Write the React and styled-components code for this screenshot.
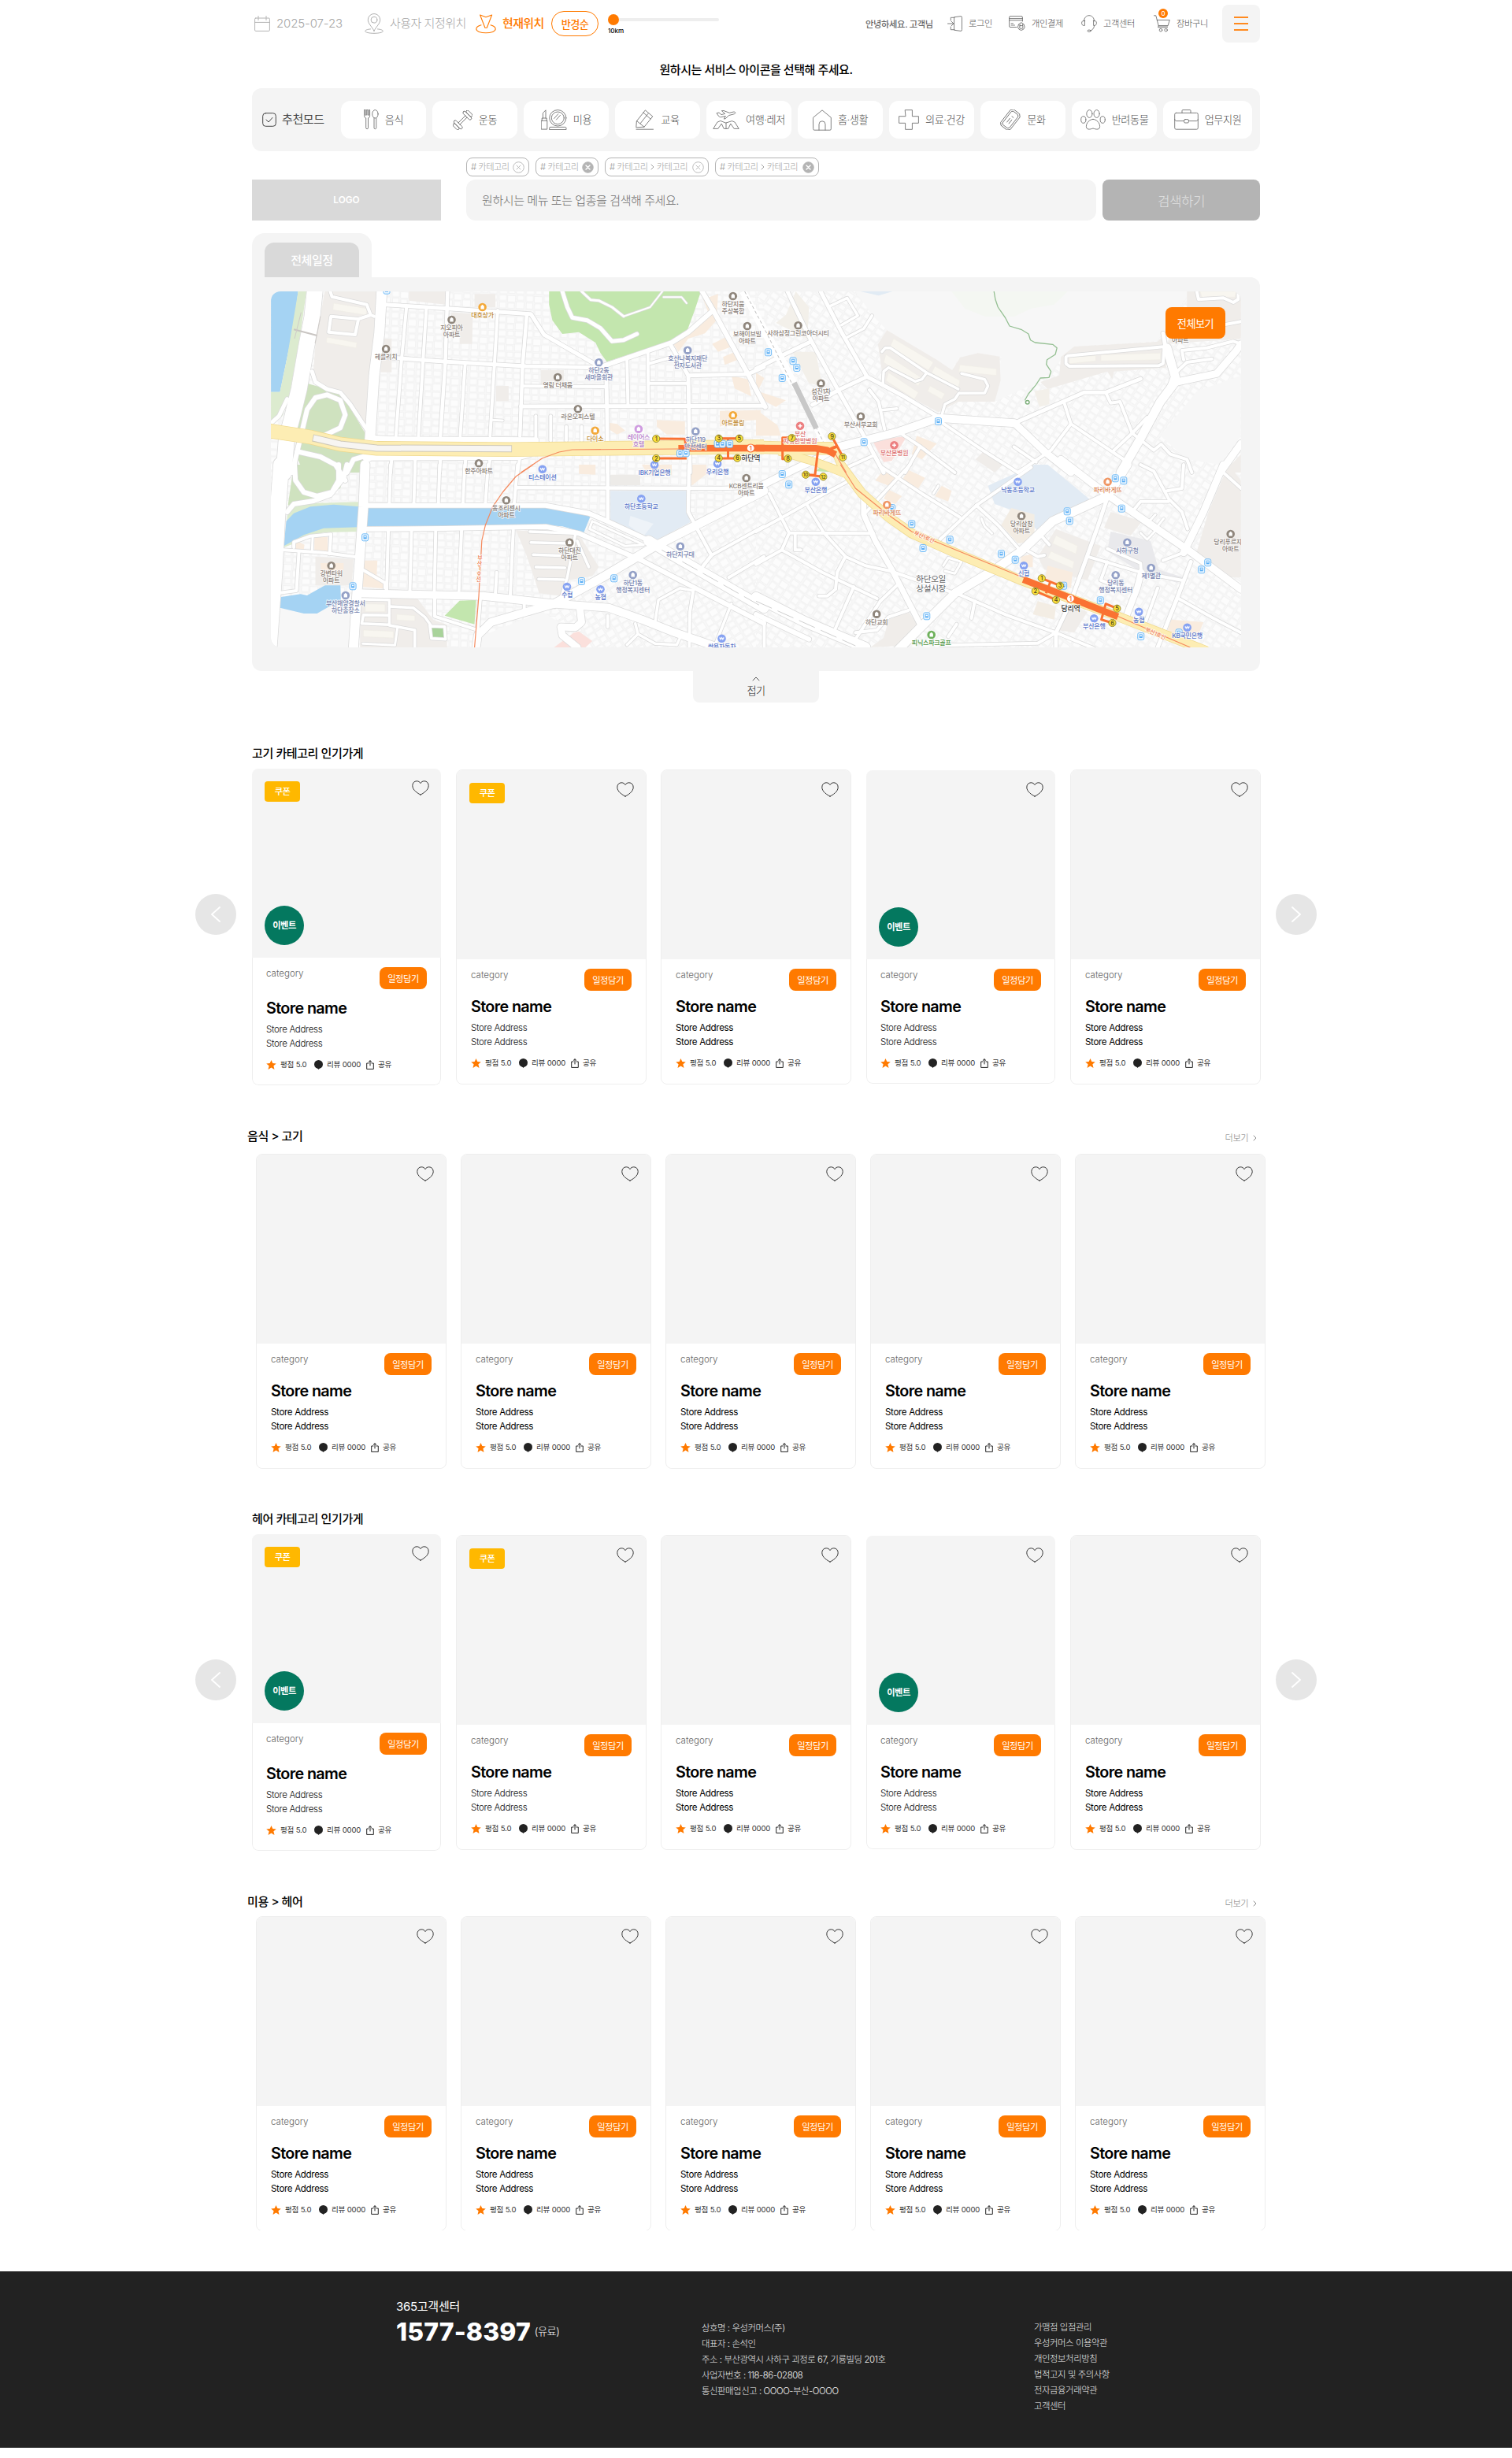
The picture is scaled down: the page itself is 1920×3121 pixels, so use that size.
import React from "react";
import styled, { createGlobalStyle, css } from "styled-components";

const ORANGE = "#ff7a00";

const type = (size, weight = 400, color = "#000", track = -0.03) => css`
  font-size: ${size * 0.94}px;
  font-weight: ${weight};
  color: ${color};
  letter-spacing: ${track}em;
  white-space: nowrap;
`;

const Global = createGlobalStyle`
  * { box-sizing: border-box; }
  body {
    margin: 0;
    background: #fff;
    font-family: Inter, "Noto Sans CJK KR", sans-serif;
    line-height: 1;
  }
  svg { display: block; flex: none; }
  button { font-family: inherit; border: 0; padding: 0; }
`;

const Page = styled.div`
  width: 1920px;
  height: 3121px;
  background: #fff;
  overflow: hidden;
`;

const Container = styled.div`
  width: 1280px;
  margin: 0 auto;
`;

/* ---------- header ---------- */

const Header = styled.header`
  height: 60px;
  display: flex;
  justify-content: space-between;
  align-items: center;
  padding-left: 3px;
`;

const HeaderSide = styled.div`
  display: flex;
  align-items: center;
`;

const Tool = styled.div`
  display: flex;
  align-items: center;
  gap: ${(p) => p.$gap || 8}px;
  width: ${(p) => p.$w}px;
  line-height: 20px;
  ${(p) => type(p.$size || 16, p.$weight || 300, p.$color || "#a6a6a6", p.$track)}
`;

const RadiusPill = styled.button`
  width: 60px;
  height: 32px;
  border: 1px solid ${ORANGE};
  border-radius: 16px;
  background: #fff;
  ${type(14, 500, ORANGE, -0.04)}
`;

const Range = styled.div`
  width: 141px;
  height: 24px;
  margin: 0 0 0 12px;
  display: flex;
  flex-direction: column;
  gap: 3px;
`;

const RangeTrack = styled.div`
  height: 14px;
  display: flex;
  align-items: center;
  &::before {
    content: "";
    width: 14px;
    height: 14px;
    border-radius: 50%;
    background: ${ORANGE};
  }
  &::after {
    content: "";
    flex: 1;
    height: 4px;
    border-radius: 0 2px 2px 0;
    background: #eee;
  }
`;

const RangeLabel = styled.div`
  line-height: 9px;
  ${type(8.6, 500, "#000", 0)}
`;

const Greeting = styled.div`
  width: 104px;
  padding-top: 1px;
  line-height: 20px;
  ${type(12, 500, "#666")}
`;

const CartIconBox = styled.span`
  position: relative;
`;

const CartBadge = styled.span`
  position: absolute;
  left: 6px;
  top: -8px;
  width: 12px;
  height: 12px;
  border-radius: 50%;
  background: ${ORANGE};
  text-align: center;
  line-height: 12px;
  ${type(8.5, 500, "#fff", 0)}
`;

const MenuButton = styled.button`
  width: 48px;
  height: 48px;
  border-radius: 8px;
  background: #f4f4f4;
  display: flex;
  flex-direction: column;
  align-items: center;
  justify-content: center;
  gap: 6px;
`;

const MenuBar = styled.span`
  width: 18px;
  height: 2px;
  background: #ff8a1f;
`;

const Guide = styled.h1`
  margin: 0;
  height: 52px;
  padding-top: 19px;
  line-height: 20px;
  text-align: center;
  ${type(16, 500, "#000", -0.032)}
`;

/* ---------- category bar ---------- */

const CategoryBar = styled.nav`
  height: 80px;
  border-radius: 12px;
  background: #f4f4f4;
  padding: 16px 10px 16px 13px;
  display: flex;
`;

const Recommend = styled.div`
  width: 100px;
  display: flex;
  align-items: center;
  gap: 7px;
  line-height: 20px;
  ${type(16, 400, "#444")}
`;

const CategoryList = styled.div`
  flex: 1;
  display: grid;
  grid-template-columns: repeat(9, 108px) 113px;
  gap: 8px;
`;

const CategoryButton = styled.button`
  border-radius: 12px;
  background: #fff;
  display: flex;
  align-items: center;
  justify-content: center;
  gap: 8px;
  line-height: 20px;
  ${type(14, 300, "#4c4c4c", -0.035)}
`;

/* ---------- search ---------- */

const TagRow = styled.div`
  display: flex;
  gap: 8px;
  padding: 8px 0 4px 272px;
`;

const Tag = styled.div`
  width: ${(p) => p.$w}px;
  height: 24px;
  padding: 0 5px;
  border: 1px solid #b4b4b4;
  border-radius: 8px;
  display: flex;
  align-items: center;
  justify-content: space-between;
  line-height: 20px;
  ${type(12, 300, "#a0a0a0", -0.045)}
`;

const TagText = styled.span`
  display: flex;
  align-items: center;
  gap: 3px;
`;

const SearchRow = styled.div`
  height: 52px;
  display: flex;
`;

const Logo = styled.div`
  width: 240px;
  margin-right: 32px;
  background: #d9d9d9;
  line-height: 52px;
  text-align: center;
  ${type(12.6, 600, "#fff", 0)}
`;

const SearchField = styled.div`
  width: 800px;
  margin-right: 8px;
  padding-left: 20px;
  border-radius: 12px;
  background: #f4f4f4;
  line-height: 53px;
  ${type(16, 300, "#6c6c6c", -0.03)}
`;

const SearchButton = styled.button`
  width: 200px;
  border-radius: 8px;
  background: #b4b4b4;
  ${type(18, 300, "#e2e2e2")}
`;

/* ---------- map panel ---------- */

const TabShell = styled.div`
  width: 152px;
  height: 56px;
  margin-top: 16px;
  padding: 12px 16px 0;
  border-radius: 16px 16px 0 0;
  background: #f4f4f4;
`;

const Tab = styled.div`
  height: 44px;
  border-radius: 12px 12px 0 0;
  background: #d9d9d9;
  line-height: 45px;
  text-align: center;
  ${type(16, 500, "#fff")}
`;

const MapPanel = styled.section`
  height: 500px;
  padding: 18px 24px 0;
  border-radius: 0 12px 12px 12px;
  background: #f4f4f4;
`;

const MapBox = styled.div`
  position: relative;
  width: 1232px;
  height: 452px;
  border-radius: 12px 12px 0 12px;
  overflow: hidden;
`;

const ViewAll = styled.button`
  position: absolute;
  right: 20px;
  top: 20px;
  width: 76px;
  height: 40px;
  border-radius: 8px;
  background: ${ORANGE};
  ${type(14, 400, "#fff", -0.04)}
`;

const Fold = styled.button`
  width: 160px;
  height: 40px;
  margin: 0 auto;
  padding-top: 7px;
  border-radius: 0 0 8px 8px;
  background: #f4f4f4;
  display: flex;
  flex-direction: column;
  align-items: center;
  gap: 2px;
  line-height: 20px;
  ${type(14, 300, "#222", -0.04)}
`;

/* ---------- store lists ---------- */

const ListHeading = styled.div`
  height: ${(p) => p.$h}px;
  padding: 0 ${(p) => (p.$wide ? "324px 0 314px" : "320px")};
  display: flex;
  justify-content: space-between;
  align-items: flex-end;
  padding-bottom: ${(p) => p.$bottom}px;
`;

const ListTitle = styled.h2`
  margin: 0;
  line-height: 20px;
  ${type(16, 500, "#000", -0.028)}
`;

const More = styled.a`
  display: flex;
  align-items: center;
  gap: 6px;
  line-height: 16px;
  ${type(12, 300, "#7c7c7c", -0.05)}
`;

const Carousel = styled.div`
  height: 402px;
  padding-left: 248px;
  display: flex;
  align-items: flex-start;
  gap: 19px;
`;

const ArrowButton = styled.button`
  width: 52px;
  height: 52px;
  margin-top: 159px;
  border-radius: 50%;
  background: #e6e6e6;
  display: flex;
  align-items: center;
  justify-content: center;
`;

const CardRow = styled.div`
  display: grid;
  grid-template-columns: repeat(5, 242px);
  gap: 18px;
  align-items: start;
`;

const PlainRow = styled.div`
  height: ${(p) => p.$h}px;
  padding-left: 325px;
  overflow: hidden;
`;

const CardBox = styled.article`
  margin: ${(p) => p.$top}px ${(p) => (p.$flat ? 1 : 0)}px 0;
  border: ${(p) => (p.$flat ? "0" : "1px solid #eeeeee")};
  border-radius: 8px;
  overflow: hidden;
`;

const Photo = styled.div`
  height: 240px;
  padding: 16px;
  background: #f4f4f4;
  display: flex;
  flex-direction: column;
  justify-content: space-between;
`;

const PhotoTop = styled.div`
  display: flex;
  justify-content: space-between;
  align-items: flex-start;
  margin: 0 -1px 0 0;
`;

const HeartSlot = styled.span`
  margin: -1px 0 0 auto;
`;

const Coupon = styled.span`
  width: 45px;
  height: 26px;
  border-radius: 4px;
  background: #ffb800;
  line-height: 26px;
  text-align: center;
  ${type(12, 500, "#fff", -0.05)}
`;

const EventBadge = styled.span`
  width: 50px;
  height: 50px;
  border-radius: 50%;
  background: #04785f;
  line-height: 50px;
  text-align: center;
  ${type(12, 700, "#fff", -0.05)}
`;

const Info = styled.div`
  height: ${(p) => p.$h}px;
  padding: 12px ${(p) => (p.$flat ? 17 : 18)}px 0;
  background: #fff;
  border: ${(p) => (p.$flat ? "1px solid #eeeeee" : "0")};
  border-top: 0;
  border-radius: 0 0 8px 8px;
`;

const InfoTop = styled.div`
  height: 28px;
  display: flex;
  justify-content: space-between;
`;

const Category = styled.span`
  line-height: 16px;
  ${type(12.3, 300, "#666", 0)}
`;

const AddButton = styled.button`
  width: 60px;
  height: 28px;
  border-radius: 8px;
  background: ${ORANGE};
  ${type(12, 400, "#fff", -0.04)}
`;

const StoreName = styled.h3`
  margin: ${(p) => p.$gap}px 0 6px;
  line-height: 24px;
  ${type(21, 600, "#000", -0.032)}
`;

const Address = styled.p`
  margin: 0;
  line-height: 18px;
  ${(p) => type(12.3, p.$bold ? 400 : 300, p.$bold ? "#000" : "#111", -0.028)}
`;

const Meta = styled.div`
  display: flex;
  align-items: center;
  height: 13px;
  margin-top: 11px;
  line-height: 13px;
  ${type(10.2, 400, "#333", -0.02)}
`;

const MetaText = styled.span`
  width: ${(p) => p.$w}px;
  margin-left: 5px;
`;

/* ---------- footer ---------- */

const Footer = styled.footer`
  height: 224px;
  margin-top: 52px;
  padding: 35px 0 0 503px;
  background: #222;
  display: flex;
`;

const Call = styled.div`
  width: 388px;
`;

const CallTitle = styled.div`
  line-height: 20px;
  ${type(16, 400, "#fff", -0.02)}
`;

const CallLine = styled.div`
  display: flex;
  align-items: center;
  gap: 5px;
  height: 40px;
  margin-top: 2px;
`;

const CallNumber = styled.span`
  ${type(34, 800, "#fff", 0.004)}
`;

const CallNote = styled.span`
  ${type(14, 300, "#fff", -0.035)}
`;

const FooterList = styled.div`
  width: ${(p) => p.$w}px;
  padding-top: ${(p) => p.$top}px;
  line-height: 20px;
  ${type(12.1, 300, "#f0f0f0", -0.037)}
`;

/* ---------- icons ---------- */

const Icon = ({ w, h, color = "#6a6a6a", sw = 0.85, children }) => (
  <svg
    width={w}
    height={h}
    viewBox={`0 0 ${w} ${h}`}
    fill="none"
    stroke={color}
    strokeWidth={sw}
    strokeLinecap="round"
    strokeLinejoin="round"
  >
    {children}
  </svg>
);

const CalendarIcon = () => (
  <Icon w={20} h={20} color="#b4b4b4" sw={1}>
    <rect x="0.6" y="3" width="18.8" height="16.4" rx="1.2" />
    <path d="M5 .5v5M15 .5v5M.6 8.4h18.8" />
  </Icon>
);

const PinIcon = () => (
  <Icon w={24} h={26} color="#a0a0a0">
    <path d="M12 22.3C9.5 17 4.3 13 4.3 8.2a7.7 7.7 0 0 1 15.4 0C19.7 13 14.5 17 12 22.3z" />
    <circle cx="12" cy="8.2" r="3.9" />
    <path d="M7.5 19.9C3 20.3.7 21.4.7 22.5c0 1.6 5 2.8 11.3 2.8s11.3-1.2 11.3-2.8c0-1.1-2.3-2.2-6.8-2.6" />
  </Icon>
);

const CurrentIcon = () => (
  <Icon w={26} h={25} color={ORANGE} sw={1.1}>
    <path d="M5.6 1 13 3.8 20.6 1l-6.3 16.2h-2.4z" />
    <path d="M7 13.8C3 15 .8 16.9.8 18.8c0 2.9 5.5 5 12.2 5s12.2-2.1 12.2-5c0-1.9-2.2-3.8-6.2-5" />
  </Icon>
);

const LoginIcon = () => (
  <Icon w={19} h={20}>
    <path d="M4.3 6V2.3H9M4.3 14v3.7H9M9 1.7 17 .6q1.5 0 1.5 1.6v15.6q0 1.6-1.5 1.6L9 18.3z" />
    <path d="M.5 10h7.3M5.2 7.2 7.9 10l-2.7 2.8" />
  </Icon>
);

const PayIcon = () => (
  <Icon w={21} h={20}>
    <path d="M10 14.5H2A1.4 1.4 0 0 1 .6 13V2A1.4 1.4 0 0 1 2 .6h14A1.4 1.4 0 0 1 17.4 2v5M.6 3.6h16.8M.6 5.8h16.8M3 9.8h2.500M3 12h4.500" />
    <path d="M14 12.600v-2a1.800 1.800 0 0 1 3.600 0v2" />
    <path d="M12.300 11.500a4.300 4.300 0 1 0 7 0M12.300 11.500l1-1.500M19.300 11.500l-1-1.500" />
    <rect x="13.800" y="12.600" width="4" height="3.600" rx=".5" />
  </Icon>
);

const HeadsetIcon = () => (
  <Icon w={20} h={22}>
    <path d="M3.4 7.8C3.6 3.6 6.4.7 10 .7s6.4 2.9 6.6 7.1" />
    <path d="M4.4 7.2v6.2C2 13.8.6 12.4.6 10.3s1.4-3.5 3.8-3.1zM15.6 7.2v6.2c2.4.4 3.8-1 3.8-3.1s-1.4-3.5-3.8-3.1z" />
    <path d="M16.6 13.5c-.3 3.5-2.2 5.6-5 6.4" />
    <ellipse cx="10" cy="20.2" rx="2" ry="1.2" />
  </Icon>
);

const CartIcon = () => (
  <Icon w={21} h={22}>
    <path d="M.5.8h2.3l3.4 13h11.5M4.3 6.4h16L18 13.8H6.2M6.2 13.8l-.6 2h12" />
    <circle cx="9" cy="19.2" r="1.8" />
    <circle cx="15.6" cy="19.2" r="1.8" />
  </Icon>
);

const CheckIcon = () => (
  <Icon w={18} h={18} color="#444" sw={1}>
    <rect x=".7" y=".7" width="16.6" height="16.6" rx="3.6" />
    <path d="m5 9 3 3 5-5.6" />
  </Icon>
);

const FoodIcon = () => (
  <Icon w={19} h={26}>
    <path d="M.6.6v7.6c0 1.6 1 2.4 2.1 2.7v12.4a1.4 1.4 0 0 0 2.8 0V10.9c1.2-.3 2.1-1.1 2.1-2.7V.6H6.1v6.6H5V.6H3.3v6.6H2.1V.6z" />
    <ellipse cx="14.4" cy="5.8" rx="3.7" ry="5.2" />
    <path d="M13 10.8v12.5a1.4 1.4 0 0 0 2.8 0V10.8" />
  </Icon>
);

const GymIcon = () => (
  <Icon w={25} h={25}>
    <g transform="rotate(-45 12.5 12.5)">
      <path d="M6.2 11h12.6M6.2 14h12.6" />
      <rect x="2.4" y="5.6" width="3.8" height="13.8" rx="1.9" />
      <rect x="18.8" y="5.6" width="3.8" height="13.8" rx="1.9" />
      <rect x="-1.2" y="7.6" width="3.6" height="9.8" rx="1.8" />
      <rect x="22.6" y="7.6" width="3.6" height="9.8" rx="1.8" />
    </g>
  </Icon>
);

const BeautyIcon = () => (
  <Icon w={33} h={26}>
    <path d="M2.4 11V4.6L6 .8V11M1.2 14.2V11h6v3.2M.6 14.2h7.2v10.9H.6z" />
    <ellipse cx="21.3" cy="10.8" rx="10.6" ry="10.2" />
    <ellipse cx="21.3" cy="10.8" rx="8" ry="7.8" />
    <path d="m16.6 11.5 5.2-5.8M19.4 13l5-5.6M10.6 25.2v-1.4a1.4 1.4 0 0 1 1.4-1.4h18.6a1.4 1.4 0 0 1 1.4 1.4v1.4z" />
  </Icon>
);

const EducationIcon = () => (
  <Icon w={24} h={26}>
    <path d="M1.6 14.6 12.4.9l9.4 8L11 22.2 1.2 22.8zM1.6 14.6l9.4 7.6M10 4l9 8M6.2 17.6 16.4 4.8" />
    <path d="M1 25.2h21.5" />
  </Icon>
);

const TravelIcon = () => (
  <Icon w={34} h={26}>
    <path d="M5.4 4.600 8 4l3 2.600 4.600-1.200L11.400 1.700 14 1.500l7.200 2.800 5-1.200c1.600-.3 2.600.4 2.600 1.200 0 .7-.9 1.300-2 1.600l-6.400 1.700-4 4-2 .5 1.900-3.600-6 1.200c-1.400 0-3-1-3.600-2.400z" />
    <path d="M9.500 14.600 5.800 16.200.8 24.400h6l4.400-6.400 3 6.400h5.600l3-6.400 4.400 6.400h6l-5-8.200-3.700-1.600-7.500 2.400zM17 17v7.400" />
  </Icon>
);

const HomeIcon = () => (
  <Icon w={24} h={27}>
    <path d="M.7 10.2 12 .9l11.300 9.300v14.600a1.400 1.400 0 0 1-1.400 1.400H2.100a1.400 1.400 0 0 1-1.400-1.400z" />
    <path d="M8 26.2v-7.400a4 4 0 0 1 8 0v7.400" />
  </Icon>
);

const MedicalIcon = () => (
  <Icon w={26} h={26}>
    <path d="M8.6.7h8.8v8h8v8.6h-8v8H8.6v-8h-8V8.7h8z" />
  </Icon>
);

const TicketIcon = () => (
  <Icon w={26} h={26}>
    <g transform="rotate(-52 13 13)">
      <path d="M3 5.4h20l3 3v9.200l-3 3H3l-3-3V8.400z" />
      <path d="M4 7.600h18l1.800 1.800v7.200L22 18.400H4l-1.800-1.800V9.400z" />
      <path d="M8 11.500h6M8 14.500h6M17.500 12v2.400" />
    </g>
  </Icon>
);

const PawIcon = () => (
  <Icon w={32} h={26}>
    <ellipse cx="11.4" cy="5.5" rx="3.6" ry="4.9" />
    <ellipse cx="20.6" cy="5.5" rx="3.6" ry="4.9" />
    <ellipse cx="3.8" cy="13" rx="3.1" ry="4.3" />
    <ellipse cx="28.2" cy="13" rx="3.1" ry="4.3" />
    <path d="M16 12.4c-4.4 0-8.6 4.6-8.6 9 0 4.600 4.200 4.200 8.600 2.600 4.400 1.600 8.600 2 8.600-2.600 0-4.400-4.200-9-8.600-9z" />
  </Icon>
);

const BriefcaseIcon = () => (
  <Icon w={31} h={26}>
    <rect x=".7" y="4.4" width="29.6" height="20.8" rx="1.8" />
    <path d="M10 4.4V1.6a1 1 0 0 1 1-1h9a1 1 0 0 1 1 1v2.8M.7 12.6c0 1.2 1 2 2.2 2h9.6M18.5 14.6h9.6c1.2 0 2.2-.8 2.2-2" />
    <rect x="12.6" y="12.6" width="5.8" height="4.4" rx="1.4" />
  </Icon>
);

const CloseDot = ({ solid }) => (
  <svg width="15" height="15" viewBox="0 0 15 15" fill="none">
    <circle cx="7.5" cy="7.5" r="6.8" fill={solid ? "#b4b4b4" : "none"} stroke="#b4b4b4" strokeWidth="0.9" />
    <path
      d="m5 5 5 5m0-5-5 5"
      stroke={solid ? "#fff" : "#b4b4b4"}
      strokeWidth={solid ? 1.4 : 0.9}
      strokeLinecap="round"
    />
  </svg>
);

const Chevron = ({ w, h, color, sw = 1, dir = "right" }) => (
  <Icon w={w} h={h} color={color} sw={sw}>
    <path
      d={
        dir === "right"
          ? `M1 1 ${w - 1} ${h / 2} 1 ${h - 1}`
          : dir === "left"
          ? `M${w - 1} 1 1 ${h / 2} ${w - 1} ${h - 1}`
          : `M1 ${h - 1} ${w / 2} 1 ${w - 1} ${h - 1}`
      }
    />
  </Icon>
);

const HeartIcon = () => (
  <Icon w={22} h={19} color="#333" sw={1}>
    <path d="M11 18.1C7.6 16.4.8 12.3.8 6.6.8 3.1 3.2.8 6.2.8c2.2 0 3.9 1.1 4.8 2.8.9-1.7 2.6-2.8 4.8-2.8 3 0 5.4 2.3 5.4 5.8 0 5.7-6.8 9.8-10.2 11.5z" />
  </Icon>
);

const StarIcon = () => (
  <svg width="13" height="12" viewBox="0 0 13 12">
    <path fill={ORANGE} d="M6.5 0l1.8 4 4.500.4-3.400 2.900 1.100 4.600-4-2.400-4 2.400 1.100-4.600L.2 4.400 4.700 4z" />
  </svg>
);

const BubbleIcon = () => (
  <svg width="11" height="12" viewBox="0 0 11 12">
    <ellipse cx="5.5" cy="5.4" rx="5.500" ry="5.400" fill="#222" />
    <path fill="#222" d="M3.800 10h3.400L5.500 12z" />
  </svg>
);

const ShareIcon = () => (
  <Icon w={10} h={12} color="#222" sw={1}>
    <path d="M3 4H.7v7.4h8.6V4H7M5 7V1M3.2 2.4 5 .7l1.8 1.7" />
  </Icon>
);

/* ---------- map drawing ---------- */

/* The sheet is surveyed in four tiles; each tile has its own origin. */
const ORIGIN = { A: [310, 290], B: [960, 290], C: [310, 590], D: [960, 590] };
const at = (t, x, y) => [
  +(ORIGIN[t][0] + x / 2.3758).toFixed(1),
  +(ORIGIN[t][1] + y / 3).toFixed(1),
];
const trace = (t, str) => {
  const n = str.split(" ").map(Number);
  const out = [];
  for (let i = 0; i < n.length; i += 2) out.push(at(t, n[i], n[i + 1]).join(" "));
  return "M" + out.join("L");
};

const AREAS = [
  ["B", "#f4f7f2", "590 240 940 240 900 290 830 305 780 335 690 335 630 305"],
  ["A", "#a5d3f3", "81 240 163 240 150 370 130 490 108 623 81 623"],
  ["A", "#dcebcf", "163 240 188 240 170 400 135 650 115 715 81 750 81 623 108 623 130 490"],
  ["A", "#f0edea", "243 240 400 240 385 500 365 780 330 690 270 615 222 595 208 560 215 440"],
  ["A", "#cfe2bf", "190 590 250 612 300 640 365 780 365 930 180 930 155 860 160 760"],
  ["C", "#cfe2bf", "150 0 310 0 290 90 220 130 132 155"],
  ["A", "#c3e6ae", "920 240 1378 240 1360 310 1338 385 1285 430 1094 508 1075 475 1060 435 1010 395 960 402 930 350 920 290"],
  ["A", "#f0edea", "497 240 608 240 608 290 497 275"],
  ["A", "#f0edea", "695 250 758 250 758 300 695 300"],
  ["A", "#f0edea", "625 320 690 325 688 440 650 440 650 410 625 405"],
  ["A", "#f0edea", "412 420 445 420 445 548 412 548"],
  ["A", "#f0edea", "760 600 798 600 798 658 760 658"],
  ["A", "#f0edea", "895 540 965 540 965 595 895 595"],
  ["A", "#f9ecdf", "1385 270 1430 250 1425 350 1390 400 1340 420 1310 470 1290 430 1340 395 1400 320"],
  ["A", "#f9ecdf", "1412 440 1460 410 1470 450 1430 470"],
  ["A", "#f9ecdf", "1445 490 1490 465 1500 495 1450 520"],
  ["A", "#f9ecdf", "1470 560 1520 575 1530 640 1480 610"],
  ["A", "#f9ecdf", "1435 695 1558 692 1558 728 1490 735 1435 755"],
  ["A", "#f9ecdf", "1245 730 1330 735 1330 785 1275 785 1245 755"],
  ["A", "#f9ecdf", "1100 740 1125 745 1150 770 1125 785 1100 765"],
  ["B", "#f9ecdf", "0 550 25 570 5 620 90 655 60 680 0 640"],
  ["B", "#f9ecdf", "0 690 65 750 75 790 0 790"],
  ["B", "#e1ebf4", "315 240 412 240 370 256"],
  ["B", "#f3f0ea", "120 240 160 300 155 420 60 360 90 330"],
  ["B", "#f3f0ea", "110 470 180 470 200 600 160 590"],
  ["B", "#f0edea", "395 388 545 500 592 540 615 492 670 475 735 488 738 580 720 660 610 660 550 700 385 590 368 440"],
  ["B", "#f0edea", "920 490 960 450 1210 432 1240 400 1237 530 1080 545 1075 575 1060 545 880 612 858 585 915 560"],
  ["B", "#f0edea", "1300 240 1463 240 1463 420 1240 440 1300 310"],
  ["B", "#f3f0ea", "840 620 885 610 885 670 855 680"],
  ["B", "#fbe0dc", "350 805 455 792 410 885 385 890"],
  ["B", "#f0edea", "690 845 745 900 720 930 662 880"],
  ["B", "#f9ecdf", "485 790 545 820 500 880 470 860"],
  ["B", "#f0edea", "1463 860 1410 930 1463 930"],
  ["C", "#dcebcf", "132 170 180 148 345 142 348 255 240 258 120 315 130 200"],
  ["C", "#a5d3f3", "127 215 150 185 200 160 270 152 348 160 348 238 240 242 180 268 120 310"],
  ["C", "#a5d3f3", "370 160 905 162 1045 195 1025 258 960 235 905 230 600 236 370 238"],
  ["C", "#a5d3f3", "108 505 170 493 190 498 250 455 290 445 292 520 250 545 220 567 180 567 108 545"],
  ["C", "#f0edea", "215 350 330 360 325 460 215 460"],
  ["C", "#f9ecdf", "230 375 300 375 300 400 270 420 235 415"],
  ["C", "#f9ecdf", "212 275 252 275 252 330 212 325"],
  ["C", "#f9ecdf", "150 285 182 305 180 325 150 325"],
  ["C", "#f9ecdf", "360 365 402 365 400 420 422 440 422 472 358 465"],
  ["C", "#f0edea", "350 505 520 505 570 590 612 610 612 696 350 696"],
  ["C", "#f0edea", "820 250 1010 265 1070 390 1050 425 975 440 960 500 890 490 875 430 850 340"],
  ["C", "#c3e6ae", "605 575 650 518 700 515 695 608"],
  ["C", "#a9d39b", "565 617 605 617 605 660 565 660"],
  ["C", "#e2ebf4", "1105 100 1335 100 1345 220 1240 290 1105 212"],
  ["C", "#eef3f8", "1165 195 1235 225 1205 272 1160 232"],
  ["C", "#edebe8", "1105 38 1195 38 1195 78 1105 78"],
  ["C", "#f9ecdf", "1010 0 1060 0 1060 38 1010 35"],
  ["C", "#f9ecdf", "1345 0 1395 0 1395 35 1350 80"],
  ["C", "#f9ecdf", "1200 0 1290 0 1290 40 1220 40"],
  ["C", "#fbe0dc", "935 696 995 640 1010 635 1050 672 1030 696"],
  ["D", "#e2ebf4", "700 80 840 0 880 0 1015 140 940 195 858 262 800 185 720 150"],
  ["D", "#f3ede4", "770 165 840 190 840 290 790 300 740 230"],
  ["D", "#f9ecdf", "385 20 425 40 400 80 360 60"],
  ["D", "#f9ecdf", "460 20 510 50 490 90 440 60"],
  ["D", "#f9ecdf", "400 95 440 120 420 150 385 130"],
  ["D", "#f9ecdf", "560 80 590 100 580 140 540 120"],
  ["D", "#f0edea", "905 245 1040 310 1000 440 870 400 850 350"],
  ["D", "#f9ecdf", "880 385 955 410 950 470 870 440"],
  ["D", "#f9ecdf", "800 350 835 340 835 390 800 390"],
  ["D", "#f0edea", "1070 180 1165 215 1130 270 1050 240"],
  ["D", "#e9e9ec", "1070 255 1190 290 1215 400 1290 430 1270 450 1150 400 1060 330"],
  ["D", "#f0edea", "1425 0 1463 60 1463 430 1420 430 1330 330 1365 180"],
  ["D", "#f0edea", "940 540 1000 560 960 640 910 630"],
  ["D", "#f0edea", "400 590 460 560 495 620 435 690 345 696 385 660"],
  ["D", "#f9ecdf", "1252 590 1350 600 1330 660 1240 640"],
  ["D", "#f3ede4", "850 520 905 540 900 590 835 570"],
  ["B", "#c3e6ae", "180 925 210 890 260 930"],
];

const ROADS = [
  ["A", 20, "213 240 205 340 188 450 166 610 145 720 128 800 120 930"],
  ["C", 20, "112 0 100 200 92 400 75 696"],
  ["A", 5, "81 742 105 715 130 650"],
  ["A", 6, "145 930 175 770 190 690 215 645 250 634 290 655 305 710 290 760 240 790 215 792"],
  ["A", 5, "205 545 215 585 250 612 290 625 320 670 372 770"],
  ["A", 6, "160 850 230 870 275 900 305 960"],
  ["A", 6, "310 930 330 880 370 865"],
  ["C", 6, "152 0 155 60 180 105 220 120 265 105 285 60 285 0"],
  ["C", 6, "130 180 150 150 210 138 260 115 300 50 310 0"],
  ["A", 13, "415 240 408 400 392 560 380 800 372 870"],
  ["C", 12, "365 0 360 160 352 300 340 500 330 696"],
  ["A", 4, "260 240 265 260 370 290 382 330 392 335"],
  ["A", 4, "382 330 345 345 335 405 255 395 262 335 345 345"],
  ["A", 5, "425 290 615 305 865 326 905 405 1070 525"],
  ["A", 5, "400 488 610 508 850 525 1070 530"],
  ["A", 4, "490 300 475 500 458 790"],
  ["A", 4, "550 300 540 500 526 790"],
  ["A", 4.5, "614 240 612 310 607 510 592 790"],
  ["A", 4, "667 515 652 790"],
  ["A", 4, "765 312 755 520 742 790"],
  ["A", 4.5, "853 326 840 525 832 790"],
  ["A", 3, "748 730 780 732"],
  ["A", 8, "385 800 460 805 880 808"],
  ["A", 5, "960 240 975 300 990 340 1035 350 1075 380 1110 430 1145 425 1185 402"],
  ["A", 3, "1018 240 1045 272 1070 275 1110 300 1145 335"],
  ["A", 2, "1145 335 1225 300 1262 240"],
  ["A", 2, "1265 262 1320 262 1335 285"],
  ["A", 6, "1070 530 1290 435 1340 395 1415 312"],
  ["A", 6, "1382 240 1415 312 1520 555 1572 680"],
  ["A", 5, "1285 440 1340 560 1520 555 1568 528"],
  ["A", 5, "1340 560 1342 700 1345 930"],
  ["A", 5, "1092 530 1095 700 1097 930"],
  ["A", 5, "835 678 1568 676"],
  ["A", 4, "1155 500 1158 672"],
  ["A", 4, "1218 475 1220 672"],
  ["A", 4, "1222 590 1340 590"],
  ["A", 4, "1222 515 1278 495"],
  ["A", 4, "840 601 1090 603"],
  ["A", 4, "880 715 880 800"],
  ["A", 4, "925 715 925 808"],
  ["A", 4, "972 755 972 808"],
  ["A", 4, "1018 755 1018 808"],
  ["A", 8, "368 872 830 870 860 860"],
  ["A", 4, "832 870 825 930"],
  ["C", 4, "825 0 815 150"],
  ["A", 4, "445 880 442 930"],
  ["C", 4, "442 0 438 150"],
  ["A", 4, "516 880 516 930"],
  ["C", 4, "516 0 512 150"],
  ["A", 4, "592 880 590 930"],
  ["C", 4, "590 0 586 150"],
  ["A", 4, "668 880 666 930"],
  ["C", 4, "666 0 660 150"],
  ["A", 4, "742 880 736 930"],
  ["C", 4, "736 0 728 150"],
  ["C", 4.5, "822 88 1440 90 1568 85"],
  ["C", 4.5, "1097 0 1097 212"],
  ["C", 4.5, "1342 0 1340 180 1365 240 1410 345 1385 385"],
  ["C", 6, "370 155 910 155 1040 185 1095 215 1240 300"],
  ["C", 6, "370 245 600 243 910 236 1010 262 1200 365 1568 605"],
  ["C", 13, "1220 290 1300 350 1568 545"],
  ["D", 13, "0 505 150 600 330 696"],
  ["D", 6, "0 570 160 665"],
  ["C", 11, "935 530 1080 430 1240 310 1568 100"],
  ["D", 9, "0 90 120 15 180 -20"],
  ["B", 9, "180 882 245 835"],
  ["C", 4, "435 250 430 480"],
  ["C", 4, "505 250 500 480"],
  ["C", 4, "578 250 574 480"],
  ["C", 4, "656 250 648 480"],
  ["C", 4, "812 250 803 495"],
  ["C", 4, "762 410 758 490"],
  ["C", 10, "345 490 720 500 940 530 1100 545 1200 590 1300 640 1430 696"],
  ["C", 10, "935 530 745 600 705 650 700 696"],
  ["C", 4, "575 500 575 578 700 628"],
  ["C", 5, "712 500 700 696"],
  ["C", 4, "845 520 845 560"],
  ["C", 4, "120 325 240 335 340 352"],
  ["C", 4, "165 335 158 480 108 488"],
  ["C", 4, "150 315 150 295 200 272 262 265 258 340"],
  ["C", 3, "207 272 205 330"],
  ["C", 4, "355 398 425 450 425 470"],
  ["C", 3.5, "355 513 438 515 438 610 355 605 360 572 438 574"],
  ["C", 3.5, "438 612 515 630 515 696"],
  ["C", 3.5, "438 540 510 545 545 580 565 615 605 617 608 665 565 662 560 610"],
  ["C", 3, "462 625 455 688 358 682"],
  ["C", 3.5, "862 255 1000 262 975 430 958 498"],
  ["C", 3.5, "865 296 975 300"],
  ["C", 3.5, "872 343 970 347"],
  ["C", 3.5, "880 390 968 393"],
  ["C", 3.5, "888 436 965 438"],
  ["C", 3.5, "1005 290 1040 390"],
  ["C", 3, "1050 215 1042 245 1150 310 1205 305 1055 218"],
  ["C", 9, "1013 548 1018 600 1000 620 955 618 960 650 1005 696"],
  ["C", 4, "1097 575 1097 618"],
  ["C", 4, "1355 480 1345 560 1343 696"],
  ["C", 3.5, "1155 686 1188 645 1180 605"],
  ["C", 3.5, "1188 645 1240 682 1305 686 1315 660"],
  ["C", 3.5, "1240 600 1250 515 1315 470 1355 480"],
  ["C", 3.5, "1470 530 1420 690"],
  ["C", 4, "1462 430 1568 350"],
  ["C", 4, "1410 345 1568 235"],
  ["B", 5, "95 240 165 425 245 610 330 800 385 930"],
  ["B", 5, "195 240 260 400 335 565"],
  ["B", 3.5, "225 295 275 265 307 332 258 368"],
  ["B", 3.5, "275 415 325 382 350 332"],
  ["B", 5, "0 535 85 480 168 430"],
  ["B", 5, "335 565 250 615 170 672"],
  ["B", 5, "335 565 440 635 550 718"],
  ["B", 10, "240 835 430 775 550 722 780 742"],
  ["B", 4, "342 615 370 660 388 765"],
  ["B", 3.5, "378 692 425 686"],
  ["B", 3.5, "380 470 390 455 405 455 515 550 610 612"],
  ["B", 3.5, "383 590 385 545 400 530 480 583 500 575 515 550"],
  ["B", 3.5, "562 705 570 670 600 650 612 628 690 627 700 600 690 575 620 553"],
  ["B", 4, "940 485 1235 450"],
  ["B", 4, "1232 450 1228 515 1215 523 945 525 935 515 935 490"],
  ["B", 5, "780 742 990 625 1055 625 1160 573"],
  ["B", 9, "780 742 870 850 950 930"],
  ["D", 9, "920 -20 1060 115 1320 340 1463 475"],
  ["B", 11, "1240 455 1268 580 1220 660 1160 800 1100 930"],
  ["B", 9, "1463 440 1450 465 1390 553 1270 585"],
  ["B", 5, "1235 450 1228 400"],
  ["B", 4, "1240 620 1255 570"],
  ["B", 4, "1290 500 1285 465 1360 455 1440 430 1463 440"],
  ["B", 4, "1270 545 1300 510 1375 497"],
  ["B", 4, "1330 240 1335 270 1410 265 1440 282 1455 270 1455 240"],
  ["B", 4, "1400 370 1463 355"],
  ["B", 4, "930 665 950 745 1115 885"],
  ["B", 4, "550 730 690 850 790 930"],
  ["B", 4, "790 930 890 845 950 745"],
  ["B", 4, "778 832 845 890"],
  ["B", 4, "1055 625 1070 665 1098 660 1135 780 1200 845 1222 822 1250 860 1300 880 1315 930"],
  ["B", 4, "1135 780 1080 845"],
  ["B", 4, "1135 780 1180 720"],
  ["B", 4, "430 775 495 830 600 930"],
  ["B", 4, "495 830 450 930"],
  ["B", 9, "1463 820 1400 930"],
  ["D", 9, "1410 0 1350 180 1290 335"],
  ["D", 4, "1410 30 1463 90"],
  ["B", 4, "355 865 250 925"],
  ["B", 4, "0 675 20 675"],
  ["D", 4, "0 255 80 200 200 115 290 55"],
  ["D", 4, "40 110 100 260 78 325 0 380"],
  ["D", 4, "155 155 205 260 270 350"],
  ["D", 4, "100 260 355 262"],
  ["D", 4, "118 265 118 325 135 325"],
  ["D", 7, "325 120 325 190 360 290 410 400 500 620"],
  ["D", 4, "78 325 200 410 365 510"],
  ["D", 4, "270 350 330 385 405 405 600 490"],
  ["D", 4, "270 350 245 410 240 475 215 500 190 500"],
  ["D", 4, "295 465 232 645"],
  ["D", 4, "425 460 375 520 300 665"],
  ["D", 4, "300 640 365 630 400 580 460 555"],
  ["D", 4, "25 590 25 696"],
  ["D", 11, "425 710 500 615 600 490 720 400 800 330 895 215 1060 120 1120 0"],
  ["D", 4, "380 10 500 110 615 200"],
  ["D", 4, "465 0 325 190"],
  ["D", 4, "555 285 665 155 830 10"],
  ["D", 4, "665 155 730 230 800 330"],
  ["D", 3, "680 205 690 235 712 262"],
  ["D", 3, "535 110 550 80"],
  ["D", 4, "605 490 760 575 905 640 1020 700"],
  ["D", 4, "905 640 850 680 560 688"],
  ["D", 5, "905 640 905 700"],
  ["D", 4, "660 520 650 585"],
  ["D", 4, "605 608 580 655"],
  ["D", 3, "565 385 580 355 620 370 600 415 570 405"],
  ["D", 5, "1060 125 1030 240 1000 345 950 520 905 640"],
  ["D", 4, "1000 350 1160 410 1290 442"],
  ["D", 4, "1060 320 1160 375 1162 410"],
  ["D", 4, "1060 370 1040 440 1100 470"],
  ["D", 8, "1162 410 1150 470 1115 585"],
  ["D", 4, "1212 470 1175 600"],
  ["D", 5, "1312 370 1270 510 1212 696"],
  ["D", 4, "1275 510 1380 585 1463 640"],
  ["D", 4, "1228 365 1300 330"],
  ["D", 4, "1135 180 1160 140 1245 140"],
  ["D", 4, "1160 0 1200 25 1245 130 1285 180 1302 245"],
  ["D", 4, "1240 100 1285 90 1290 0"],
  ["D", 3, "1180 225 1205 190"],
  ["D", 3, "1205 245 1230 205"],
  ["D", 3, "1160 260 1180 285 1210 245"],
  ["D", 4, "815 325 850 350 870 345"],
  ["D", 4, "860 270 885 305"],
];

const YELLOW = [
  ["A", 17, "60 768 200 795 290 822 400 838 800 842 1100 838 1568 832"],
  ["B", 15, "0 833 120 838 235 838"],
  ["B", 9, "70 850 180 890 280 935"],
  ["D", 9, "180 -10 270 35"],
  ["B", 8, "235 840 255 900 275 940"],
  ["D", 11, "255 0 320 110 400 200 470 262 600 335 800 440 1095 580 1360 710"],
];

const METRO = [
  ["A", "835 930 900 875 950 852 990 843 1310 840"],
  ["C", "872 0 820 45 780 105 750 160 728 230 717 290 708 500 695 700"],
  ["B", "235 850 272 930"],
  ["D", "255 0 300 90 400 192 470 255 545 295 810 432"],
  ["D", "1090 577 1310 696"],
];

const PLATFORMS = [
  ["A", 8.5, "1310 838 1570 837"],
  ["B", 8.5, "0 837 180 838 215 845 240 862"],
  ["D", 8.5, "806 437 1092 579"],
  ["A", 3, "1243 801 1330 802 1333 835"],
  ["A", 3, "1243 876 1335 876"],
  ["A", 3, "1432 800 1494 800"],
  ["A", 3, "1460 800 1460 876"],
  ["A", 3, "1432 876 1488 876"],
  ["B", 3, "108 797 80 797 80 878 96 878"],
  ["B", 3, "230 795 262 870"],
  ["B", 4, "225 840 245 830"],
  ["B", 3, "187 845 178 940 150 938 203 946"],
  ["D", 3, "862 433 917 461"],
  ["D", 3, "888 446 875 490"],
  ["D", 3, "843 482 905 515"],
  ["D", 3, "1089 548 1055 530 1042 590 1075 603"],
];

const EXITS = [
  ["A", 1243, 801, 1], ["A", 1243, 876, 2], ["A", 1432, 800, 3], ["A", 1432, 875, 4],
  ["A", 1494, 800, 5], ["A", 1488, 875, 6], ["B", 108, 798, 7], ["B", 96, 877, 8],
  ["B", 229, 792, 9], ["B", 262, 872, 11], ["D", 150, 38, 10], ["D", 203, 46, 12],
  ["D", 862, 433, 1], ["D", 917, 461, 3], ["D", 843, 482, 2], ["D", 905, 515, 4],
  ["D", 1089, 548, 5], ["D", 1075, 603, 6],
];

const STOPS = [
  ["A", 1315, 857], ["A", 1333, 856], ["A", 1428, 821], ["A", 1443, 821], ["A", 1465, 821], ["A", 430, 236],
  ["B", 37, 472], ["B", 112, 505], ["B", 123, 531], ["B", 79, 570], ["B", 550, 735], ["B", 326, 814],
  ["C", 365, 277], ["C", 328, 463], ["C", 1018, 444], ["C", 1116, 433],
  ["D", 79, 36], ["D", 99, 76], ["D", 410, 165], ["D", 470, 226], ["D", 585, 286], ["D", 504, 318],
  ["D", 740, 340], ["D", 782, 362], ["D", 939, 178], ["D", 946, 214], ["D", 1103, 167], ["D", 1084, 52],
  ["D", 1109, 61], ["D", 1363, 373], ["D", 1344, 400], ["D", 515, 577], ["D", 1039, 517], ["D", 1161, 654],
  ["D", 1276, 640], ["D", 928, 461],
];

const KIND = {
  home: ["#8f867c", "#8a8078"],
  shop: ["#f3a93a", "#c18a2e"],
  civic: ["#93a0c6", "#7482ae"],
  bank: ["#86a2f2", "#5673c9"],
  hotel: ["#cf9be0", "#b67fcc"],
  med: ["#ec7f80", "#dd7272"],
  food: ["#f09765", "#dd8653"],
  golf: ["#6fb15c", "#4f9440"],
};

const PLACES = [
  ["A", 719, 300, "shop", "대호상가"],
  ["A", 626, 348, "home", "지오피아", "아파트"],
  ["A", 428, 459, "home", "헤를리치"],
  ["A", 1070, 511, "civic", "하단2동", "새마을회관"],
  ["A", 946, 567, "home", "영림 더채움"],
  ["A", 1007, 688, "home", "라온오피스텔"],
  ["A", 1059, 770, "shop", "다이소"],
  ["A", 1190, 764, "hotel", "레이어스", "호텔"],
  ["A", 1362, 773, "civic", "하단119", "안전센터"],
  ["A", 1475, 712, "shop", "아트몰링"],
  ["A", 1475, 258, "home", "하단지움", "주상복합"],
  ["A", 1518, 372, "home", "보해이브빌", "아파트"],
  ["A", 1338, 464, "civic", "호산나복지재단", "전자도서관"],
  ["A", 708, 895, "home", "한주아파트"],
  ["A", 900, 917, "bank", "티스테이션"],
  ["A", 1238, 901, "bank", "IBK기업은행"],
  ["A", 1428, 896, "bank", "우리은행"],
  ["B", 127, 370, "home", "사하삼정그린코아더시티"],
  ["B", 196, 590, "home", "섬진1차", "아파트"],
  ["B", 316, 716, "home", "부산서부교회"],
  ["B", 133, 752, "med", "부산", "자생한방병원"],
  ["B", 417, 826, "med", "부산본병원"],
  ["B", 1280, 370, "home", "벽산블루밍", "아파트"],
  ["C", 791, 136, "home", "동조리젠시", "아파트"],
  ["C", 1515, 51, "home", "KCB센트리움", "아파트"],
  ["C", 1198, 130, "bank", "하단초등학교"],
  ["C", 982, 296, "home", "하단대진", "아파트"],
  ["C", 1316, 311, "civic", "하단지구대"],
  ["C", 1173, 420, "civic", "하단1동", "행정복지센터"],
  ["C", 974, 465, "bank", "수협"],
  ["C", 1075, 475, "bank", "농협"],
  ["C", 263, 385, "home", "강변타워", "아파트"],
  ["C", 306, 498, "civic", "부산해양경찰서", "하단출장소"],
  ["C", 1441, 662, "bank", "쌍용자동차"],
  ["D", 180, 65, "bank", "부산은행"],
  ["D", 395, 153, "food", "파리바게뜨"],
  ["D", 790, 65, "bank", "낙동초등학교"],
  ["D", 1061, 65, "food", "파리바게뜨"],
  ["D", 801, 196, "home", "당리삼창", "아파트"],
  ["D", 1120, 296, "civic", "사하구청"],
  ["D", 1192, 393, "civic", "제1별관"],
  ["D", 1085, 421, "civic", "당리동", "행정복지센터"],
  ["D", 1432, 264, "home", "당리푸르지오", "아파트"],
  ["D", 808, 385, "bank", "신협"],
  ["D", 1155, 560, "bank", "농협"],
  ["D", 1020, 586, "bank", "부산은행"],
  ["D", 1301, 620, "bank", "KB국민은행"],
  ["D", 364, 569, "home", "하단교회"],
  ["D", 529, 648, "golf", "피닉스파크골프"],
];

const MapText = styled.text`
  font-family: Inter, "Noto Sans CJK KR", sans-serif;
  font-size: ${(p) => p.$size || 8}px;
  font-weight: ${(p) => p.$weight || 500};
  letter-spacing: -0.03em;
  text-anchor: middle;
  paint-order: stroke;
  stroke: ${(p) => (p.$bare ? "none" : "#fff")};
  stroke-width: 1.6px;
  stroke-opacity: 0.8;
`;

const Lots = ({ id, angle }) => (
  <pattern id={id} width="34" height="27" patternUnits="userSpaceOnUse" patternTransform={`rotate(${angle})`}>
    <rect width="34" height="27" fill="#f7f7f7" />
    <g fill="#fcfcfc" stroke="#f1f1f1" strokeWidth="0.7">
      <rect x="1" y="1" width="9" height="7" />
      <rect x="11.5" y="1.5" width="10" height="8" />
      <rect x="24" y="1" width="8" height="6" />
      <rect x="1.5" y="10" width="8" height="7.5" />
      <rect x="12" y="11" width="8" height="6.5" />
      <rect x="22.5" y="9" width="10" height="8.5" />
      <rect x="1" y="19" width="10" height="7" />
      <rect x="13" y="19.5" width="7.5" height="6" />
      <rect x="22.5" y="19.5" width="9.5" height="6.5" />
    </g>
  </pattern>
);

const BLOCKS = [
  ["B", "415 420 535 510 520 540 405 450"],
  ["B", "392 480 500 570 490 600 385 510"],
  ["B", "400 550 490 625 478 650 392 580"],
  ["B", "615 520 725 535 725 560 612 545"],
  ["B", "540 525 615 580 610 610 530 550"],
  ["B", "525 600 570 630 560 650 518 620"],
  ["B", "945 490 1025 485 1025 505 945 515"],
  ["B", "1040 482 1220 475 1220 500 1040 505"],
  ["B", "1340 240 1450 240 1445 262 1345 262"],
  ["D", "905 270 970 310 965 340 895 300"],
  ["D", "890 330 960 370 955 395 880 355"],
  ["C", "365 530 425 532 425 560 365 560"],
  ["C", "460 570 515 575 515 595 460 592"],
  ["C", "360 630 450 635 450 660 360 655"],
  ["A", "270 285 370 305 368 330 268 310"],
  ["A", "250 415 340 435 338 455 248 435"],
];

const OPEN_GROUND = [
  ["B", "300 240 1310 240 1210 430 960 450 860 580 720 660 740 490 615 490 590 540 395 388 350 330"],
  ["B", "1330 620 1463 560 1463 790 1400 900 1300 880 1220 790"],
  ["C", "100 545 330 540 330 696 85 696"],
  ["C", "720 650 900 560 950 600 1000 696 710 696"],
];

const LINE_LABELS = [
  ["D", 505, 282, 24],
  ["D", 1203, 650, 24],
];

const CityMap = () => (
  <svg width="1232" height="452" viewBox="344 370 1232 452">
    <defs>
      <Lots id="lotsWest" angle={2} />
      <Lots id="lotsMid" angle={-32} />
      <Lots id="lotsEast" angle={34} />
    </defs>
    <rect x="344" y="370" width="1232" height="452" fill="url(#lotsWest)" />
    <path d={trace("C", "1240 310 1568 100 1700 0 1700 696 940 696 940 530") + "z"} fill="url(#lotsMid)" />
    <path d={trace("B", "0 240 1463 240 1463 930 250 930 220 830") + "z"} fill="url(#lotsEast)" />
    <path d={trace("D", "250 0 1463 0 1463 696 0 696 0 90") + "z"} fill="url(#lotsEast)" />
    {OPEN_GROUND.map(([t, pts], i) => (
      <path key={i} d={trace(t, pts) + "z"} fill="#f7f7f7" />
    ))}
    {AREAS.map(([t, fill, pts], i) => (
      <path key={i} d={trace(t, pts) + "z"} fill={fill} />
    ))}
    <g fill="#f8f6f0" stroke="#efece4" strokeWidth="0.5">
      {BLOCKS.map(([t, pts], i) => (
        <path key={i} d={trace(t, pts) + "z"} />
      ))}
    </g>

    <g fill="none" strokeLinejoin="round" strokeLinecap="round">
      {ROADS.map(([t, w, pts], i) => (
        <path key={i} d={trace(t, pts)} stroke="#dadada" strokeWidth={w + 1.5} />
      ))}
      {ROADS.map(([t, w, pts], i) => (
        <path key={i} d={trace(t, pts)} stroke="#fff" strokeWidth={w} />
      ))}
    </g>

    <g fill="none">
      <path d={trace("A", "1505 240 1568 390 1655 590")} stroke="#fff" strokeWidth="9" />
      <path d={trace("B", "-40 240 75 490 115 590 210 830")} stroke="#fff" strokeWidth="8" />
      <path d={trace("A", "1510 240 1575 395 1656 600")} stroke="#bdbdbd" strokeWidth="1" strokeDasharray="4 3" />
      <path d={trace("B", "180 755 212 835")} stroke="#bdbdbd" strokeWidth="1" strokeDasharray="4 3" />
      <path d={trace("B", "115 588 182 762")} stroke="#c8c8c8" strokeWidth="7" />
      <path d={trace("C", "1260 325 1568 545")} stroke="#cfcfcf" strokeWidth="1" strokeDasharray="22 8" />
      <path d={trace("D", "0 520 300 690")} stroke="#cfcfcf" strokeWidth="1" strokeDasharray="22 8" />
      <path d={trace("A", "150 385 220 408")} stroke="#c9c5c2" strokeWidth="2" />
      <path d={trace("A", "172 320 152 420")} stroke="#cfcbc8" strokeWidth="1" />
      <path d={trace("A", "230 335 214 438")} stroke="#cfcbc8" strokeWidth="1" />
      <path
        d={trace("B", "718 240 722 270 730 300 752 340 765 372 800 385 822 402 828 425 842 435 895 442 908 455 903 480 878 500 876 518 890 545 884 568 858 570 845 595 822 630 811 655")}
        stroke="#94bf92"
        strokeWidth="1.3"
        strokeLinejoin="round"
      />
      <circle cx={at("B", 819, 662)[0]} cy={at("B", 819, 662)[1]} r="2.3" stroke="#7fb07c" strokeWidth="1.5" fill="#fff" />
    </g>

    <g fill="none" strokeLinejoin="round">
      {YELLOW.map(([t, w, pts], i) => (
        <path key={i} d={trace(t, pts)} stroke="#efd98e" strokeWidth={w + 1.4} />
      ))}
      {YELLOW.map(([t, w, pts], i) => (
        <path key={i} d={trace(t, pts)} stroke="#fdedb3" strokeWidth={w} />
      ))}
      <path d={trace("A", "207 798 290 822 400 837 808 839")} stroke="#cfc9b8" strokeWidth="9" />
      <path d={trace("A", "209 798 290 822 400 837 806 839")} stroke="#f7f5f2" strokeWidth="7" />
      {METRO.map(([t, pts], i) => (
        <path key={i} d={trace(t, pts)} stroke="#f58a5e" strokeWidth="1.2" />
      ))}
      {PLATFORMS.map(([t, w, pts], i) => (
        <path key={i} d={trace(t, pts)} stroke="#fa7233" strokeWidth={w} />
      ))}
    </g>

    {STOPS.map(([t, x, y], i) => {
      const [cx, cy] = at(t, x, y);
      return (
        <g key={i}>
          <rect x={cx - 4} y={cy - 4.5} width="8" height="9" rx="2" fill="#e9f5ff" stroke="#64b5f6" strokeWidth="0.9" />
          <path d={`M${cx - 2} ${cy - 2.6}h4v4.6h-4z`} fill="#5aaef5" />
          <path d={`M${cx - 1.2} ${cy - 1.6}h2.4v1.6h-2.4z`} fill="#fff" />
        </g>
      );
    })}

    {PLACES.map(([t, x, y, kind, ...lines], i) => {
      const [cx, cy] = at(t, x, y);
      const [dot, ink] = KIND[kind];
      return (
        <g key={i}>
          <circle cx={cx} cy={cy} r="5.3" fill={dot} />
          {kind === "bank" ? (
            <path
              d={`M${cx - 2.6} ${cy - 1.8}l1.3 3.6 1.3-3.6 1.3 3.6 1.3-3.6M${cx - 3} ${cy}h6`}
              stroke="#fff"
              strokeWidth="0.9"
              fill="none"
            />
          ) : kind === "med" ? (
            <path d={`M${cx - 2.5} ${cy}h5M${cx} ${cy - 2.5}v5`} stroke="#fff" strokeWidth="1.6" />
          ) : (
            <path d={`M${cx - 2.2} ${cy + 2.4}v-3.6l2.2-2 2.2 2v3.6z`} fill="#fff" />
          )}
          {lines.map((line, k) => (
            <MapText key={k} x={cx} y={cy + 12.9 + k * 9.1} fill={ink}>
              {line}
            </MapText>
          ))}
        </g>
      );
    })}

    {EXITS.map(([t, x, y, n], i) => {
      const [cx, cy] = at(t, x, y);
      return (
        <g key={i}>
          <circle cx={cx} cy={cy} r="4.6" fill="#fbdf3a" stroke="#8f8330" strokeWidth="0.9" />
          <MapText $bare $size={n > 9 ? 6.5 : 7.5} x={cx} y={cy + 2.6} fill="#4a4422">
            {n}
          </MapText>
        </g>
      );
    })}

    {[["A", 1528, 837, "하단역"], ["D", 949, 510, "당리역"]].map(([t, x, y, name]) => {
      const [cx, cy] = at(t, x, y);
      return (
        <g key={name}>
          <circle cx={cx} cy={cy} r="5" fill="#fff" stroke="#fa7233" strokeWidth="1.2" />
          <MapText $bare $weight={600} x={cx} y={cy + 2.9} fill="#fa7233">
            1
          </MapText>
          <MapText $size={9} x={cx} y={cy + 16} fill="#333">
            {name}
          </MapText>
        </g>
      );
    })}

    {LINE_LABELS.map(([t, x, y, a], i) => {
      const [cx, cy] = at(t, x, y);
      return (
        <MapText key={i} $size={7} x={cx} y={cy} fill="#ef7d4f" transform={`rotate(${a} ${cx} ${cy})`}>
          부산1호선
        </MapText>
      );
    })}
    {"부산1호선".split("").map((ch, i) => {
      const [cx, cy] = at("C", 711 - i, 363 + i * 20);
      return (
        <MapText key={i} $size={7} x={cx} y={cy} fill="#ef7d4f">
          {ch}
        </MapText>
      );
    })}
    {["하단오일", "상설시장"].map((line, i) => {
      const [cx, cy] = at("D", 528, 446 + i * 37);
      return (
        <MapText key={line} $size={10.6} $weight={400} x={cx} y={cy} fill="#666">
          {line}
        </MapText>
      );
    })}
  </svg>
);

/* ---------- composed parts ---------- */

const StoreCard = ({ flat, top = 0, tall, coupon, event, bold }) => (
  <CardBox $flat={flat} $top={top}>
    <Photo>
      <PhotoTop>
        {coupon && <Coupon>쿠폰</Coupon>}
        <HeartSlot>
          <HeartIcon />
        </HeartSlot>
      </PhotoTop>
      {event && <EventBadge>이벤트</EventBadge>}
    </Photo>
    <Info $flat={flat} $h={tall ? 162 : 158}>
      <InfoTop>
        <Category>category</Category>
        <AddButton>일정담기</AddButton>
      </InfoTop>
      <StoreName $gap={tall ? 12 : 8}>Store name</StoreName>
      <Address $bold={bold}>Store Address</Address>
      <Address $bold={bold}>Store Address</Address>
      <Meta>
        <StarIcon />
        <MetaText $w={43}>평점 5.0</MetaText>
        <BubbleIcon />
        <MetaText $w={50}>리뷰 0000</MetaText>
        <ShareIcon />
        <MetaText $w={20}>공유</MetaText>
      </Meta>
    </Info>
  </CardBox>
);

const PopularList = () => (
  <Carousel>
    <ArrowButton>
      <Chevron w={12} h={20} color="#fff" sw={1.8} dir="left" />
    </ArrowButton>
    <CardRow>
      <StoreCard flat tall coupon event />
      <StoreCard top={1} coupon />
      <StoreCard top={1} bold />
      <StoreCard flat top={2} event />
      <StoreCard top={1} bold />
    </CardRow>
    <ArrowButton>
      <Chevron w={12} h={20} color="#fff" sw={1.8} />
    </ArrowButton>
  </Carousel>
);

const CategoryStores = ({ height }) => (
  <PlainRow $h={height}>
    <CardRow>
      {[0, 1, 2, 3, 4].map((n) => (
        <StoreCard key={n} bold />
      ))}
    </CardRow>
  </PlainRow>
);

const MoreLink = () => (
  <More>
    더보기
    <Chevron w={5} h={8} color="#888" sw={1} />
  </More>
);

const CATEGORIES = [
  ["음식", FoodIcon],
  ["운동", GymIcon],
  ["미용", BeautyIcon],
  ["교육", EducationIcon],
  ["여행·레저", TravelIcon],
  ["홈·생활", HomeIcon],
  ["의료·건강", MedicalIcon],
  ["문화", TicketIcon],
  ["반려동물", PawIcon],
  ["업무지원", BriefcaseIcon],
];

const TAGS = [
  { w: 80, parts: ["# 카테고리"] },
  { w: 80, parts: ["# 카테고리"], solid: true },
  { w: 132, parts: ["# 카테고리", "카테고리"] },
  { w: 132, parts: ["# 카테고리", "카테고리"], solid: true },
];

export default function App() {
  return (
    <Page>
      <Global />
      <Container>
        <Header>
          <HeaderSide>
            <Tool $w={140} $track={-0.01}>
              <CalendarIcon />
              2025-07-23
            </Tool>
            <Tool $w={141} $track={-0.035}>
              <PinIcon />
              사용자 지정위치
            </Tool>
            <Tool $w={96} $weight={500} $color={ORANGE} $track={-0.045}>
              <CurrentIcon />
              현재위치
            </Tool>
            <RadiusPill>반경순</RadiusPill>
            <Range>
              <RangeTrack />
              <RangeLabel>10km</RangeLabel>
            </Range>
          </HeaderSide>
          <HeaderSide>
            <Greeting>안녕하세요. 고객님</Greeting>
            <Tool $w={78} $size={12} $color="#4c4c4c">
              <LoginIcon />
              로그인
            </Tool>
            <Tool $w={92} $size={12} $color="#4c4c4c">
              <PayIcon />
              개인결제
            </Tool>
            <Tool $w={92} $size={12} $color="#4c4c4c">
              <HeadsetIcon />
              고객센터
            </Tool>
            <Tool $w={87} $size={12} $color="#4c4c4c">
              <CartIconBox>
                <CartIcon />
                <CartBadge>0</CartBadge>
              </CartIconBox>
              장바구니
            </Tool>
            <MenuButton>
              <MenuBar />
              <MenuBar />
              <MenuBar />
            </MenuButton>
          </HeaderSide>
        </Header>

        <Guide>원하시는 서비스 아이콘을 선택해 주세요.</Guide>

        <CategoryBar>
          <Recommend>
            <CheckIcon />
            추천모드
          </Recommend>
          <CategoryList>
            {CATEGORIES.map(([label, Glyph]) => (
              <CategoryButton key={label}>
                <Glyph />
                {label}
              </CategoryButton>
            ))}
          </CategoryList>
        </CategoryBar>

        <TagRow>
          {TAGS.map((tag, i) => (
            <Tag key={i} $w={tag.w}>
              <TagText>
                {tag.parts[0]}
                {tag.parts[1] && <Chevron w={5} h={8} color="#a0a0a0" />}
                {tag.parts[1]}
              </TagText>
              <CloseDot solid={tag.solid} />
            </Tag>
          ))}
        </TagRow>
        <SearchRow>
          <Logo>LOGO</Logo>
          <SearchField>원하시는 메뉴 또는 업종을 검색해 주세요.</SearchField>
          <SearchButton>검색하기</SearchButton>
        </SearchRow>

        <TabShell>
          <Tab>전체일정</Tab>
        </TabShell>
        <MapPanel>
          <MapBox>
            <CityMap />
            <ViewAll>전체보기</ViewAll>
          </MapBox>
        </MapPanel>
        <Fold>
          <Chevron w={10} h={6} color="#555" dir="up" />
          접기
        </Fold>
      </Container>

      <ListHeading $h={84} $bottom={9}>
        <ListTitle>고기 카테고리 인기가게</ListTitle>
      </ListHeading>
      <PopularList />

      <ListHeading $h={87} $wide $bottom={12}>
        <ListTitle>음식 &gt; 고기</ListTitle>
        <MoreLink />
      </ListHeading>
      <CategoryStores height={400} />

      <ListHeading $h={83} $bottom={9}>
        <ListTitle>헤어 카테고리 인기가게</ListTitle>
      </ListHeading>
      <PopularList />

      <ListHeading $h={83} $wide $bottom={8}>
        <ListTitle>미용 &gt; 헤어</ListTitle>
        <MoreLink />
      </ListHeading>
      <CategoryStores height={399} />

      <Footer>
        <Call>
          <CallTitle>365고객센터</CallTitle>
          <CallLine>
            <CallNumber>1577-8397</CallNumber>
            <CallNote>(유료)</CallNote>
          </CallLine>
        </Call>
        <FooterList $w={422} $top={27}>
          <div>상호명 : 우성커머스(주)</div>
          <div>대표자 : 손석인</div>
          <div>주소 : 부산광역시 사하구 괴정로 67, 기룡빌딩 201호</div>
          <div>사업자번호 : 118-86-02808</div>
          <div>통신판매업신고 : OOOO-부산-OOOO</div>
        </FooterList>
        <FooterList $w={160} $top={26}>
          <div>가맹점 입점관리</div>
          <div>우성커머스 이용약관</div>
          <div>개인정보처리방침</div>
          <div>법적고지 및 주의사항</div>
          <div>전자금융거래약관</div>
          <div>고객센터</div>
        </FooterList>
      </Footer>
    </Page>
  );
}
